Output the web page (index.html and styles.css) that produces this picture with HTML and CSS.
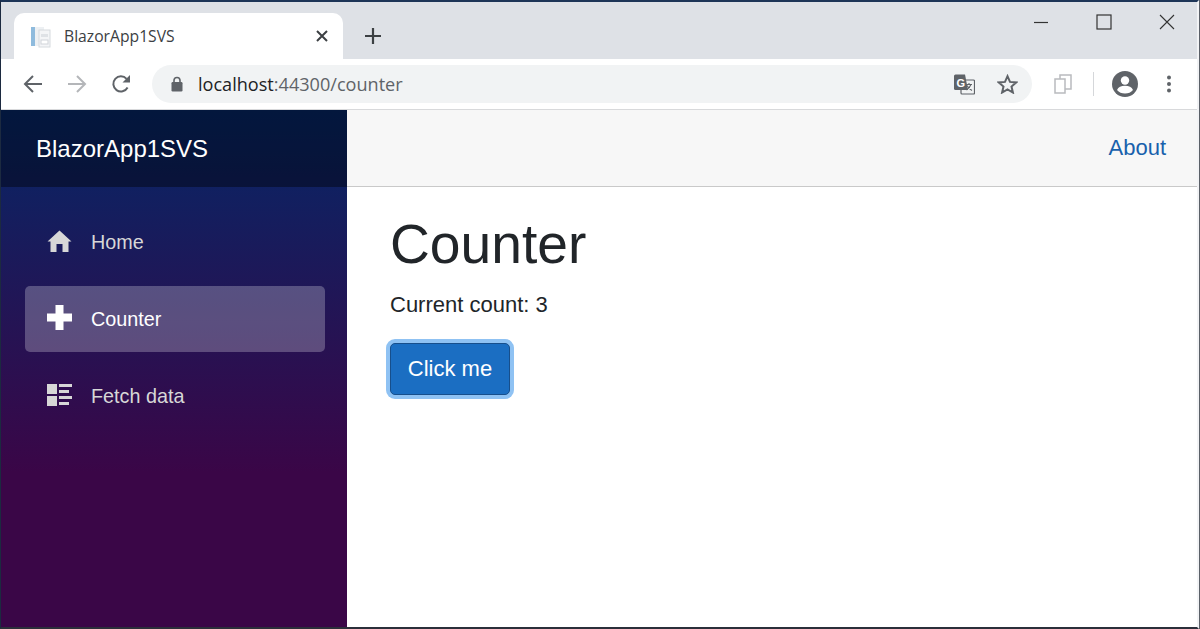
FILE: index.html
```html
<!DOCTYPE html>
<html lang="en">
<head>
    <meta charset="UTF-8">
    <meta name="viewport" content="width=device-width, initial-scale=1.0">
    <title>BlazorApp1SVS</title>
    <link rel="stylesheet" href="styles.css">
</head>
<body>

<div class="window">
    <!-- browser tabs -->
    <div class="tabstrip">
        <div class="tab">
            <svg class="favicon" width="22" height="22" viewBox="0 0 22 22">
                <rect x="1" y="1" width="4" height="19" fill="#8fbbdd"/>
                <rect x="5" y="1" width="9" height="19" fill="#edf0f3"/>
                <rect x="9" y="4" width="11" height="17" fill="#f4f5f7" stroke="#d6dade"/>
                <rect x="11" y="8" width="7" height="3" fill="#dfe2e6"/>
                <rect x="11" y="14" width="7" height="4" fill="#fff" stroke="#d0d4d9"/>
            </svg>
            <span class="tab-title">BlazorApp1SVS</span>
            <svg class="tab-close" width="14" height="14" viewBox="0 0 14 14">
                <path d="M2 2 L12 12 M12 2 L2 12" stroke="#3c4043" stroke-width="2"/>
            </svg>
        </div>
        <svg class="new-tab" width="18" height="18" viewBox="0 0 18 18">
            <path d="M9 1 V17 M1 9 H17" stroke="#3c4043" stroke-width="2.2"/>
        </svg>
        <div class="win-controls">
            <svg width="16" height="16" viewBox="0 0 16 16"><path d="M1 8.5 H15" stroke="#333" stroke-width="1.2"/></svg>
            <svg width="16" height="16" viewBox="0 0 16 16"><rect x="1" y="1" width="14" height="14" fill="none" stroke="#333" stroke-width="1.2"/></svg>
            <svg width="16" height="16" viewBox="0 0 16 16"><path d="M1 1 L15 15 M15 1 L1 15" stroke="#333" stroke-width="1.1"/></svg>
        </div>
    </div>

    <!-- address bar -->
    <div class="toolbar">
        <svg width="20" height="20" viewBox="0 0 20 20"><path d="M19 10 H2 M10 2 L2 10 L10 18" fill="none" stroke="#5f6368" stroke-width="2"/></svg>
        <svg class="nav-gap" width="20" height="20" viewBox="0 0 20 20"><path d="M1 10 H18 M10 2 L18 10 L10 18" fill="none" stroke="#b4b6b9" stroke-width="2"/></svg>
        <svg class="nav-gap" width="20" height="20" viewBox="0 0 20 20"><path d="M16.6 13.5 A7.6 7.6 0 1 1 15.6 4.8" fill="none" stroke="#5f6368" stroke-width="2"/><path d="M11.5 8.5 H19 V1 Z" fill="#5f6368"/></svg>
        <div class="omnibox">
            <svg width="12" height="16" viewBox="0 0 12 16"><path d="M3 6.5 V4.5 A3 3 0 0 1 9 4.5 V6.5" fill="none" stroke="#5f6368" stroke-width="1.6"/><rect x="0.5" y="6" width="11" height="9.5" rx="1.2" fill="#5f6368"/></svg>
            <span class="url"><span class="host">localhost</span>:44300/counter</span>
            <svg class="translate" width="21" height="21" viewBox="0 0 21 21">
                <rect x="7" y="6" width="13.5" height="14" rx="1" fill="#f1f3f4" stroke="#5f6368" stroke-width="1.2"/>
                <path d="M0 2 Q0 0.5 1.5 0.5 H11 L14 16 H1.5 Q0 16 0 14.5 Z" fill="#5f6368"/>
                <text x="2.5" y="12.5" class="translate-g">G</text>
                <path d="M12 10.5 H18 M15 9 V10.5 M17 10.5 Q15.5 14 12.5 16 M13 11.5 Q15 15 18 16.5" fill="none" stroke="#5f6368" stroke-width="1.1"/>
            </svg>
            <svg class="star" width="21" height="20" viewBox="0 0 21 20"><path d="M10.5 2.2 L13 7.9 L19.2 8.4 L14.5 12.5 L15.9 18.5 L10.5 15.3 L5.1 18.5 L6.5 12.5 L1.8 8.4 L8 7.9 Z" fill="none" stroke="#5f6368" stroke-width="2"/></svg>
        </div>
        <svg class="ext" width="18" height="20" viewBox="0 0 18 20"><path d="M6 5 V1 H12 L17 1 V15 H11 M1 5 H11 V19 H1 Z" fill="none" stroke="#b9bbbe" stroke-width="1.5"/></svg>
        <div class="divider"></div>
        <svg class="avatar" width="26" height="26" viewBox="0 0 26 26"><circle cx="13" cy="13" r="13" fill="#5f6368"/><circle cx="13" cy="9.5" r="4.2" fill="#fff"/><path d="M5 19 Q7 14.8 13 14.8 Q19 14.8 21 19 Q18 22.5 13 22.5 Q8 22.5 5 19 Z" fill="#fff"/></svg>
        <svg class="menu" width="6" height="18" viewBox="0 0 6 18"><circle cx="3" cy="2.5" r="2" fill="#5f6368"/><circle cx="3" cy="9" r="2" fill="#5f6368"/><circle cx="3" cy="15.5" r="2" fill="#5f6368"/></svg>
    </div>

    <!-- the app -->
    <div class="app">
        <div class="sidebar">
            <div class="brand">BlazorApp1SVS</div>
            <ul class="nav">
                <li class="nav-item">
                    <svg width="24" height="22" viewBox="0 0 24 22"><path d="M12 0.5 L24 11.5 H21 V22 H15 V14 H9 V22 H3 V11.5 H0 Z" fill="#d7d7d7"/></svg>
                    Home
                </li>
                <li class="nav-item active">
                    <svg width="25" height="25" viewBox="0 0 25 25"><path d="M8.5 0 H16.5 V8.5 H25 V16.5 H16.5 V25 H8.5 V16.5 H0 V8.5 H8.5 Z" fill="#fff"/></svg>
                    Counter
                </li>
                <li class="nav-item">
                    <svg width="25" height="22" viewBox="0 0 25 22"><path d="M0 0 H10 V10 H0 Z M0 12 H10 V22 H0 Z M12 0 H25 V3 H12 Z M12 6 H22 V9 H12 Z M12 12 H25 V15 H12 Z M12 18 H22 V21 H12 Z" fill="#d7d7d7"/></svg>
                    Fetch data
                </li>
            </ul>
        </div>
        <div class="main">
            <div class="top-row"><a class="about">About</a></div>
            <div class="content">
                <h1>Counter</h1>
                <p>Current count: 3</p>
                <button class="btn">Click me</button>
            </div>
        </div>
    </div>
</div>

</body>
</html>
```

FILE: styles.css
```css
html, body {
    margin: 0;
    height: 100%;
    overflow: hidden;
}
body {
    font-family: "Liberation Sans", Arial, sans-serif;
    background-color: #5b6068;
}
.window {
    width: 1199px;
    height: 629px;
    box-sizing: border-box;
    border-top: 2px solid #1d3557;
    border-left: 1px solid #1c2a40;
    border-right: 2px solid #f2f3f5;
    border-bottom: 2px solid #2b2f3a;
    background-color: #fff;
    display: flex;
    flex-direction: column;
}

/* tabs */
.tabstrip {
    height: 57px;
    flex-shrink: 0;
    background-color: #dee1e6;
    display: flex;
    align-items: flex-end;
    padding-left: 13px;
}
.tab {
    width: 329px;
    height: 46px;
    box-sizing: border-box;
    background-color: #fff;
    border-radius: 10px 10px 0 0;
    display: flex;
    align-items: center;
    padding: 0 14px 0 16px;
}
.favicon {
    margin-top: 1px;
}
.tab-title {
    font-family: "Open Sans", sans-serif;
    font-size: 15.7px;
    color: #3c4043;
    margin-left: 12px;
    flex: 1;
}
.new-tab {
    margin: 0 0 14px 21px;
}
.win-controls {
    margin-left: auto;
    align-self: flex-start;
    display: flex;
    gap: 47px;
    padding: 12px 22px 0 0;
}

/* address bar */
.toolbar {
    height: 51px;
    flex-shrink: 0;
    box-sizing: border-box;
    background-color: #fff;
    border-bottom: 1px solid #d8d9db;
    display: flex;
    align-items: center;
    padding-left: 22px;
}
.nav-gap {
    margin-left: 24px;
}
.omnibox {
    width: 880px;
    height: 38px;
    box-sizing: border-box;
    margin-left: 21px;
    background-color: #f1f3f4;
    border-radius: 19px;
    display: flex;
    align-items: center;
    padding: 0 14px 0 19px;
}
.url {
    font-family: "Open Sans", sans-serif;
    font-size: 18.1px;
    color: #5f6368;
    margin-left: 15px;
    flex: 1;
}
.host {
    color: #202124;
}
.translate-g {
    font-family: "Liberation Sans", sans-serif;
    font-size: 11px;
    font-weight: bold;
    fill: #fff;
}
.star {
    margin-left: 22px;
}
.ext {
    margin-left: 22px;
}
.divider {
    width: 1px;
    height: 24px;
    background-color: #d5d7da;
    margin-left: 21px;
}
.avatar {
    margin-left: 18px;
}
.menu {
    margin-left: 28px;
}

/* blazor app */
.app {
    flex: 1;
    display: flex;
    min-height: 0;
}
.sidebar {
    width: 346px;
    flex-shrink: 0;
    background-image: linear-gradient(180deg, #052767 0%, #3a0647 70%);
}
.brand {
    height: 77px;
    box-sizing: border-box;
    background-color: rgba(0, 0, 0, 0.4);
    color: #fff;
    font-size: 24px;
    padding: 0 0 0 35px;
    display: flex;
    align-items: center;
}
.nav {
    list-style: none;
    margin: 0;
    padding: 22px 22px 0 24px;
}
.nav-item {
    height: 66px;
    margin-bottom: 11px;
    box-sizing: border-box;
    border-radius: 5px;
    color: #d7d7d7;
    font-size: 19.8px;
    display: flex;
    align-items: center;
    gap: 19px;
    padding-left: 22px;
}
.nav-item svg {
    width: 25px;
    flex-shrink: 0;
    margin-bottom: 3px;
}
.nav-item.active {
    background-color: rgba(255, 255, 255, 0.25);
    color: #fff;
}
.main {
    flex: 1;
    display: flex;
    flex-direction: column;
    min-width: 0;
}
.top-row {
    height: 77px;
    box-sizing: border-box;
    background-color: #f7f7f7;
    border-bottom: 1px solid #c9c9c9;
    display: flex;
    align-items: center;
    justify-content: flex-end;
    padding-right: 31px;
}
.about {
    color: #1861ac;
    font-size: 22px;
}
.content {
    padding: 22px 0 0 43px;
    color: #212529;
}
h1 {
    font-size: 55.2px;
    font-weight: 400;
    line-height: 70px;
    margin: 0 0 10px;
}
p {
    font-size: 22px;
    line-height: 32px;
    margin: 0 0 22px;
}
.btn {
    font-family: inherit;
    font-size: 22px;
    color: #fff;
    background-color: #1b6ec2;
    border: 1px solid #174f8c;
    border-radius: 5px;
    height: 52px;
    width: 120px;
    box-shadow: 0 0 0 4px #8fc2f3;
    padding: 0;
}
```
